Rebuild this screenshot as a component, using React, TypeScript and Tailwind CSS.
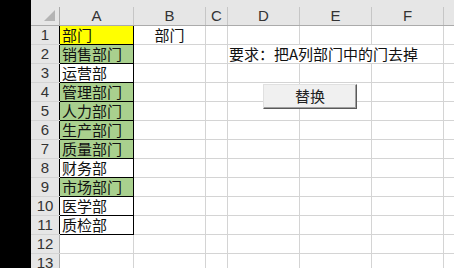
const cols = [
  { key: 'A', w: 'w-[74px]' },
  { key: 'B', w: 'w-[72px]' },
  { key: 'C', w: 'w-[22px]' },
  { key: 'D', w: 'w-[72px]' },
  { key: 'E', w: 'w-[72px]' },
  { key: 'F', w: 'w-[72px]' },
];

const colA: { text: string; bg: string }[] = [
  { text: '部门', bg: 'bg-[#ffff00]' },
  { text: '销售部门', bg: 'bg-[#a9d08e]' },
  { text: '运营部', bg: 'bg-white' },
  { text: '管理部门', bg: 'bg-[#a9d08e]' },
  { text: '人力部门', bg: 'bg-[#a9d08e]' },
  { text: '生产部门', bg: 'bg-[#a9d08e]' },
  { text: '质量部门', bg: 'bg-[#a9d08e]' },
  { text: '财务部', bg: 'bg-white' },
  { text: '市场部门', bg: 'bg-[#a9d08e]' },
  { text: '医学部', bg: 'bg-white' },
  { text: '质检部', bg: 'bg-white' },
];

const rows = Array.from({ length: 13 }, (_, i) => i + 1);

const cjk = "font-['Noto_Sans_CJK_SC',sans-serif]";
const latin = "font-['Liberation_Sans','Noto_Sans_CJK_SC',sans-serif]";

function Cell({ w, children, className = '' }: { w: string; children?: React.ReactNode; className?: string }) {
  return (
    <div
      className={`${w} h-full shrink-0 border-r border-[#d4d4d4] flex items-center overflow-visible whitespace-nowrap text-[15px] leading-[18px] text-[#111] ${cjk} ${className}`}
    >
      {children}
    </div>
  );
}

export default function App() {
  return (
    <div className="w-[454px] h-[268px] overflow-hidden bg-black flex">
      {/* left black strip */}
      <div className="w-[31px] shrink-0" />

      <div className="relative flex-1 bg-white flex flex-col">
        {/* top band */}
        <div className="h-[7px] shrink-0 bg-[#e6e6e6]" />

        {/* column header */}
        <div className="h-[19px] shrink-0 flex bg-[#e6e6e6] border-b border-[#ababab]">
          <div className="w-[29px] shrink-0 h-full border-r border-[#ababab] relative">
            <svg className="absolute left-[13px] top-[3px]" width="11" height="11" viewBox="0 0 11 11">
              <polygon points="11,0 11,11 0,11" fill="#b4b4b4" />
            </svg>
          </div>
          {cols.map((c) => (
            <div
              key={c.key}
              className={`${c.w} shrink-0 h-full border-r border-[#c6c6c6] flex items-center justify-center text-[15px] text-[#333] ${latin}`}
            >
              {c.key}
            </div>
          ))}
          <div className="flex-1" />
        </div>

        {/* rows */}
        {rows.map((r) => {
          const a = colA[r - 1];
          return (
            <div key={r} className="h-[19px] shrink-0 flex border-b border-[#d4d4d4]">
              <div
                className={`w-[29px] shrink-0 h-full bg-[#e6e6e6] border-r ${a ? 'border-black' : 'border-[#ababab]'} flex items-center justify-center text-[15px] text-[#333] ${latin}`}
              >
                {r}
              </div>
              {a ? (
                <div
                  className={`w-[74px] shrink-0 h-[calc(100%+1px)] ${a.bg} border-r border-b border-black flex items-center pl-[2px] text-[15px] leading-[18px] text-[#111] ${cjk}`}
                >
                  {a.text}
                </div>
              ) : (
                <Cell w="w-[74px]" />
              )}
              <Cell w="w-[72px]" className="justify-center">
                {r === 1 ? '部门' : null}
              </Cell>
              <Cell w="w-[22px]" />
              {r === 2 ? (
                <Cell w="w-[216px]" className="pl-[1px]">
                  要求：把A列部门中的门去掉
                </Cell>
              ) : (
                <>
                  <Cell w="w-[72px]" />
                  <Cell w="w-[72px]" />
                  <Cell w="w-[72px]" />
                </>
              )}
              <div className="flex-1" />
            </div>
          );
        })}

        {/* form button */}
        <button
          className={`absolute left-[232px] top-[84px] w-[94px] h-[25px] bg-[#f0f0f0] border border-t-[#e0e0e0] border-l-[#e0e0e0] border-r-[#5a5a5a] border-b-[#5a5a5a] shadow-[inset_-1px_-1px_0_#a0a0a0] flex items-center justify-center text-[15px] text-[#222] ${cjk}`}
        >
          替换
        </button>
      </div>
    </div>
  );
}
